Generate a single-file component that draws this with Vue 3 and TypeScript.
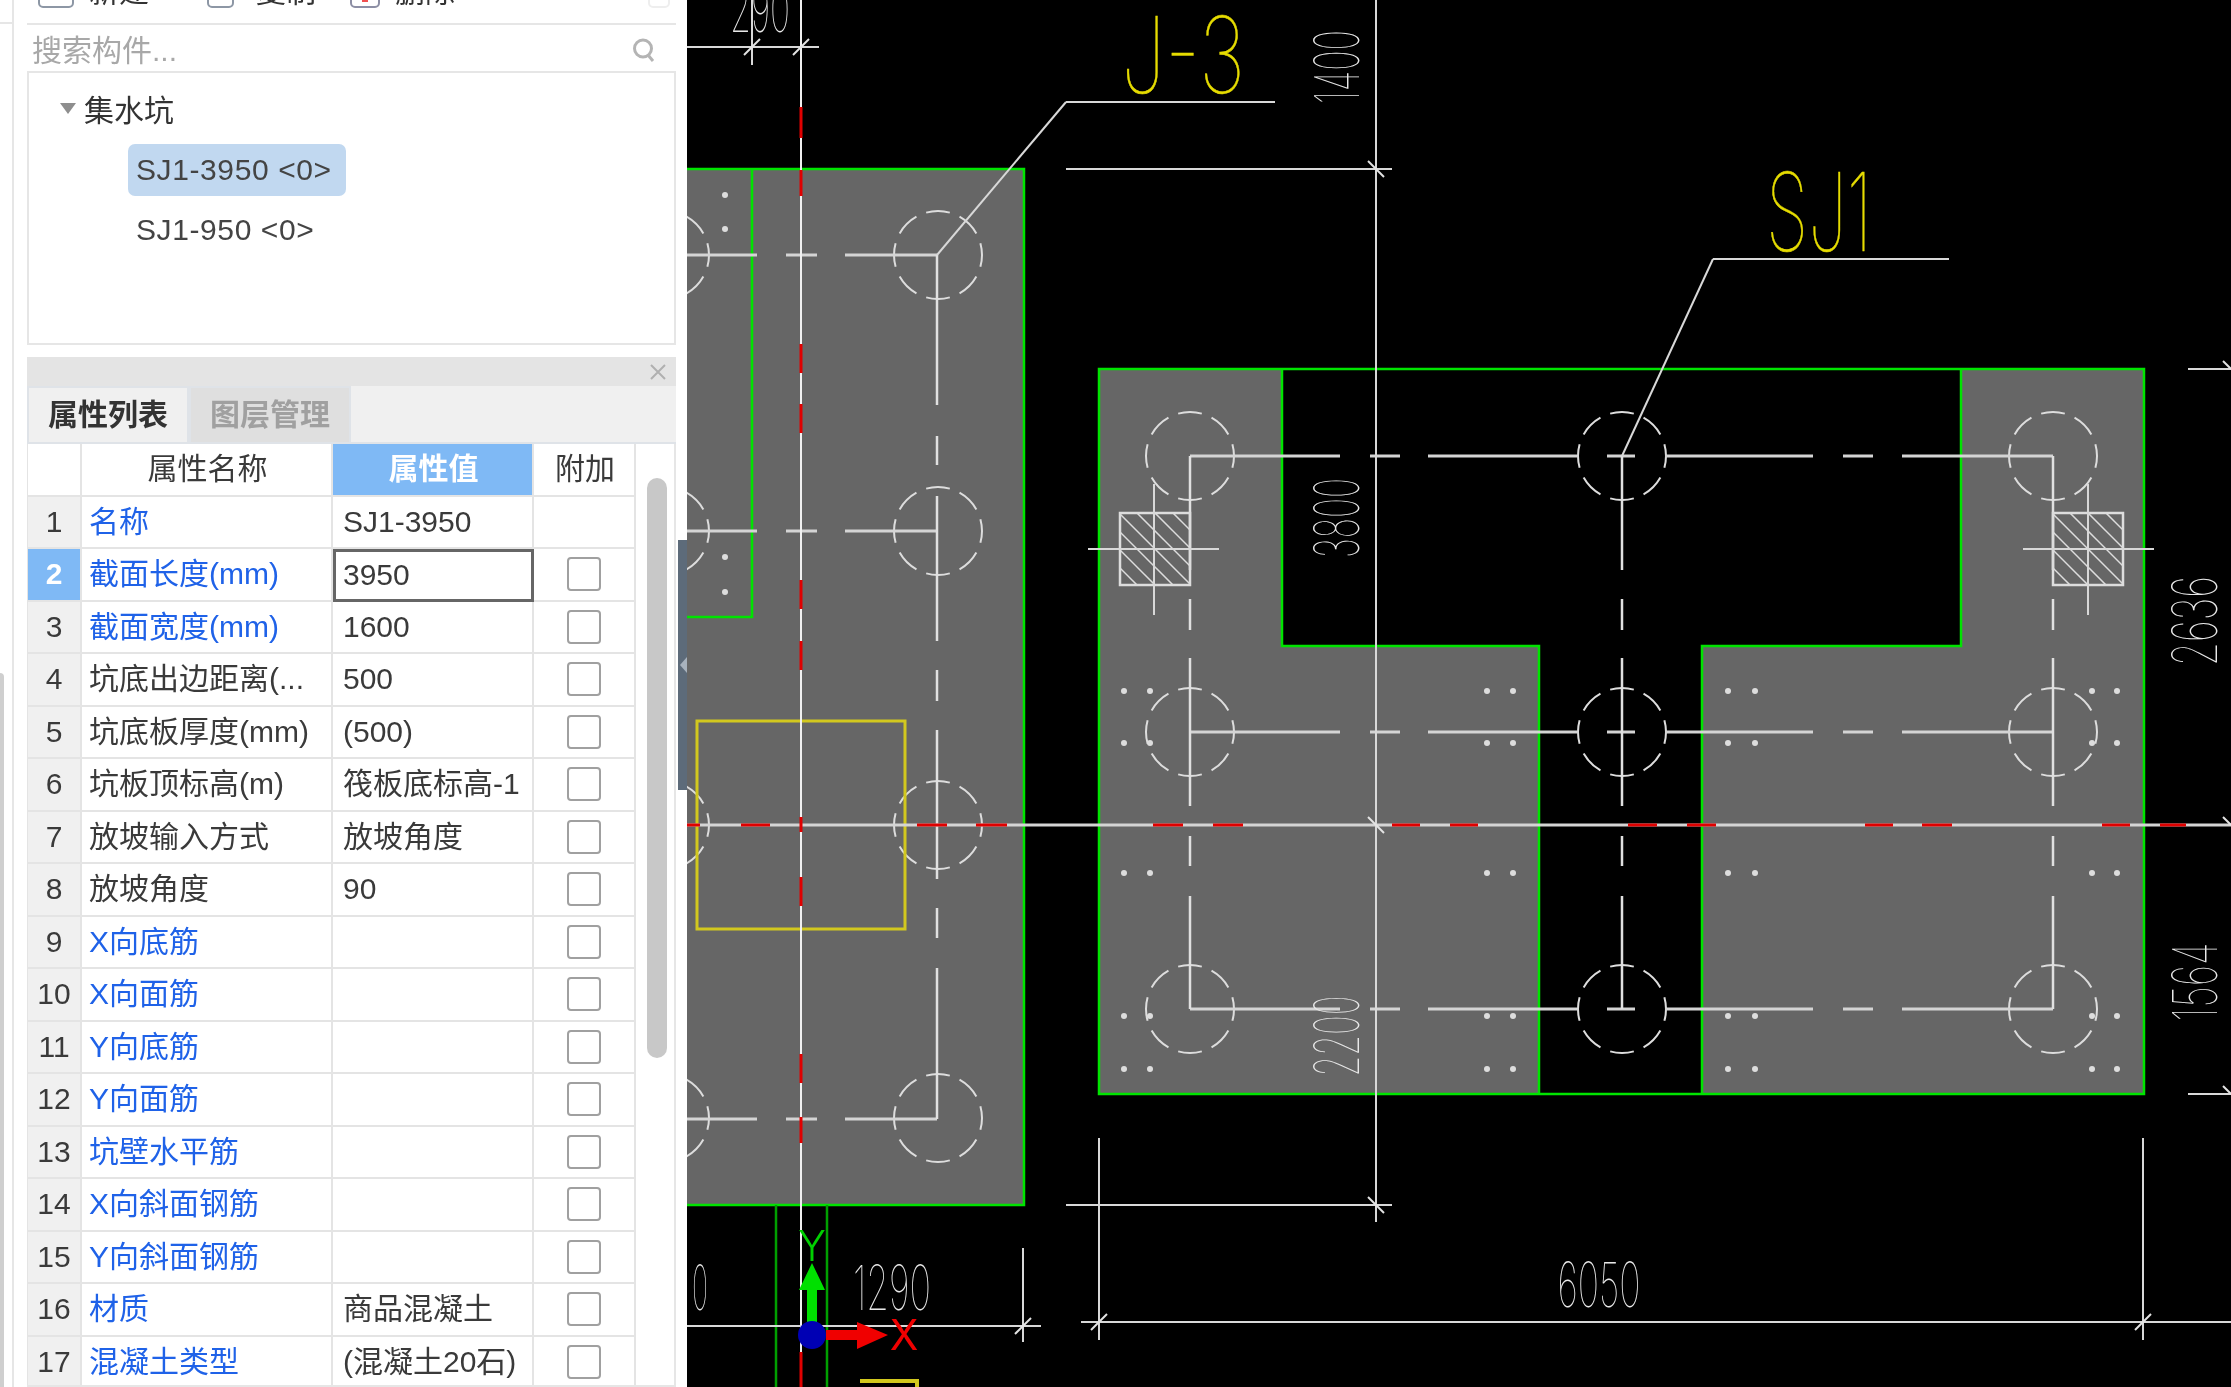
<script setup lang="ts">
type Seg = [number, number, number, number]

interface PropRow {
  name: string
  value: string
  link: boolean
}

interface CadLabel {
  text: string
  x: number
  y: number
  size: number
  len: number
  vertical?: boolean
}

const rows: PropRow[] = [
  { name: '名称', value: 'SJ1-3950', link: true },
  { name: '截面长度(mm)', value: '3950', link: true },
  { name: '截面宽度(mm)', value: '1600', link: true },
  { name: '坑底出边距离(...', value: '500', link: false },
  { name: '坑底板厚度(mm)', value: '(500)', link: false },
  { name: '坑板顶标高(m)', value: '筏板底标高-1', link: false },
  { name: '放坡输入方式', value: '放坡角度', link: false },
  { name: '放坡角度', value: '90', link: false },
  { name: 'X向底筋', value: '', link: true },
  { name: 'X向面筋', value: '', link: true },
  { name: 'Y向底筋', value: '', link: true },
  { name: 'Y向面筋', value: '', link: true },
  { name: '坑壁水平筋', value: '', link: true },
  { name: 'X向斜面钢筋', value: '', link: true },
  { name: 'Y向斜面钢筋', value: '', link: true },
  { name: '材质', value: '商品混凝土', link: true },
  { name: '混凝土类型', value: '(混凝土20石)', link: true },
]

// drawing coordinates are page pixels, the svg viewBox starts at x=687
const hAxis: Seg[] = []
const vAxis: Seg[] = []
for (const y of [255, 531, 1119]) {
  for (const [a, b] of [[687, 757], [786, 817], [845, 937]]) hAxis.push([a, y, b, y])
}
for (const y of [456, 732, 1009]) {
  for (const [a, b] of [[1190, 1340], [1370, 1400], [1428, 1577], [1607, 1635], [1665, 1813], [1843, 1873], [1902, 2053]]) {
    hAxis.push([a, y, b, y])
  }
}
for (const [a, b] of [[255, 405], [436, 465], [496, 641], [670, 701], [730, 879], [908, 938], [968, 1119]]) {
  vAxis.push([937, a, 937, b])
}
for (const x of [1190, 1622, 2053]) {
  for (const [a, b] of [[456, 570], [599, 630], [658, 806], [836, 866], [896, 1009]]) {
    vAxis.push([x, a, x, b])
  }
}

const circles: [number, number][] = []
for (const y of [255, 531, 825, 1118]) circles.push([665, y], [938, y])
for (const y of [456, 732, 1009]) circles.push([1190, y], [1622, y], [2053, y])

const dots: [number, number][] = []
for (const y of [195, 229, 557, 592]) dots.push([725, y])
for (const x of [1124, 1150, 1487, 1513, 1728, 1755, 2092, 2117]) {
  for (const y of [691, 743, 873, 1016, 1069]) dots.push([x, y])
}

const redV: [number, number][] = [
  [107, 138], [170, 196], [344, 373], [404, 433], [580, 609], [641, 670],
  [817, 832], [877, 906], [1054, 1083], [1117, 1143], [1352, 1387],
]
const redH: [number, number][] = [
  [687, 700], [741, 770], [917, 947], [976, 1007], [1153, 1183], [1213, 1243], [1392, 1420], [1450, 1478],
  [1628, 1657], [1687, 1716], [1865, 1893], [1922, 1952], [2102, 2130], [2160, 2186],
]

const dimLines: Seg[] = [
  [687, 47, 819, 47], [752, 0, 752, 65],
  [1066, 169, 1392, 169], [1376, 0, 1376, 1222], [1066, 1205, 1392, 1205],
  [2188, 369, 2231, 369], [2188, 1094, 2231, 1094],
  [1081, 1322, 2231, 1322], [1099, 1138, 1099, 1340], [2143, 1138, 2143, 1340],
  [687, 1326, 1041, 1326], [1023, 1248, 1023, 1342],
  [937, 255, 1066, 102], [1066, 102, 1275, 102],
  [1622, 456, 1713, 259], [1713, 259, 1949, 259],
  [1088, 549, 1219, 549], [1154, 484, 1154, 615],
  [2023, 549, 2154, 549], [2088, 484, 2088, 615],
]
const ticks: Seg[] = [
  [744, 55, 760, 39], [793, 55, 809, 39],
  [1368, 161, 1384, 177], [1368, 817, 1384, 833], [1368, 1197, 1384, 1213],
  [1091, 1330, 1107, 1314], [2135, 1330, 2151, 1314], [1015, 1334, 1031, 1318],
  [2223, 361, 2231, 369], [2223, 817, 2231, 825], [2223, 1086, 2231, 1094],
]

const hatchOffsets = [-72, -54, -36, -18, 0, 18, 36, 54, 72]

const labels: CadLabel[] = [
  { text: '290', x: 760, y: 10, size: 62, len: 60 },
  { text: '1400', x: 1337, y: 67, size: 62, len: 74, vertical: true },
  { text: '3800', x: 1337, y: 518, size: 62, len: 80, vertical: true },
  { text: '2200', x: 1337, y: 1036, size: 62, len: 81, vertical: true },
  { text: '2636', x: 2195, y: 621, size: 62, len: 90, vertical: true },
  { text: '1564', x: 2195, y: 982, size: 62, len: 79, vertical: true },
  { text: '6050', x: 1599, y: 1285, size: 62, len: 83 },
  { text: '1290', x: 892, y: 1288, size: 62, len: 78 },
  { text: '0', x: 700, y: 1288, size: 62, len: 16 },
]
</script>

<template>
  <div class="screen">
    <aside class="sidebar">
      <div class="rail">
        <div class="rail-top"></div>
        <div class="rail-gap"></div>
        <div class="rail-thumb"></div>
      </div>

      <div class="panels">
        <div class="toolbar">
          <div class="toolbar-inner">
            <span class="tool-icon"></span><span class="tool-label">新建</span>
            <span class="tool-icon small"></span><span class="tool-label">复制</span>
            <span class="tool-icon small del"><i class="del-mark"></i></span><span class="tool-label">删除</span>
            <span class="tool-spacer"></span>
            <span class="tool-more"></span>
          </div>
        </div>

        <div class="search">
          <span class="search-hint">搜索构件...</span>
          <svg class="search-icon" viewBox="0 0 24 24" width="24" height="24">
            <circle cx="11" cy="10.5" r="8.5" fill="none" stroke="#b4b4b4" stroke-width="3" />
            <path d="M16 17 L21 23" stroke="#b4b4b4" stroke-width="3" />
          </svg>
        </div>

        <div class="tree">
          <div class="tree-root">
            <span class="caret"></span>
            <span>集水坑</span>
          </div>
          <div class="tree-item selected">SJ1-3950 &lt;0&gt;</div>
          <div class="tree-item">SJ1-950 &lt;0&gt;</div>
        </div>

        <section class="props">
          <div class="props-bar">
            <svg viewBox="0 0 16 16" width="16" height="16">
              <path d="M1 1 L15 15 M15 1 L1 15" stroke="#b0b0b0" stroke-width="2" />
            </svg>
          </div>
          <div class="tabs">
            <div class="tab active">属性列表</div>
            <div class="tab">图层管理</div>
          </div>
          <div class="table-wrap">
            <div class="table">
              <div class="cell num"></div>
              <div class="cell head">属性名称</div>
              <div class="cell head current">属性值</div>
              <div class="cell head">附加</div>
              <template v-for="(row, i) in rows" :key="i">
                <div class="cell num" :class="{ on: i === 1 }">{{ i + 1 }}</div>
                <div class="cell name" :class="{ link: row.link }">{{ row.name }}</div>
                <div class="cell value" :class="{ editing: i === 1 }">{{ row.value }}</div>
                <div class="cell check"><span v-if="i > 0" class="box"></span></div>
              </template>
            </div>
            <div class="scroll"><div class="scroll-thumb"></div></div>
          </div>
        </section>
      </div>

      <div class="collapse"><span class="collapse-arrow"></span></div>
    </aside>

    <svg class="canvas" viewBox="687 0 1544 1387" width="1544" height="1387">
      <defs>
        <clipPath id="hatch-l"><rect x="1120" y="513" width="70" height="72" /></clipPath>
        <clipPath id="hatch-r"><rect x="2053" y="513" width="70" height="72" /></clipPath>
      </defs>

      <!-- slabs -->
      <path class="slab" d="M687 169 H1024 V1205 H687 Z" />
      <path class="slab" d="M1099 369 H1282 V646 H1539 V1094 H1099 Z" />
      <path class="slab" d="M2144 369 H1961 V646 H1702 V1094 H2144 Z" />
      <path class="edge" d="M687 169 H1024 V1205 H687 M752 169 V617 H687" />
      <path class="edge" d="M1099 369 H2144 V1094 H1099 Z M1282 369 V646 H1539 V1094 M1961 369 V646 H1702 V1094" />
      <path class="edge dark" d="M776 1205 V1387 M827 1205 V1387" />

      <!-- pile caps and axes -->
      <circle v-for="(c, i) in circles" :key="'c' + i" class="pile" :cx="c[0]" :cy="c[1]" r="44" />
      <line v-for="(s, i) in hAxis" :key="'h' + i" class="axis-h" :x1="s[0]" :y1="s[1]" :x2="s[2]" :y2="s[3]" />
      <line v-for="(s, i) in vAxis" :key="'v' + i" class="axis-v" :x1="s[0]" :y1="s[1]" :x2="s[2]" :y2="s[3]" />
      <circle v-for="(d, i) in dots" :key="'d' + i" class="dot" :cx="d[0]" :cy="d[1]" r="3" />

      <!-- columns -->
      <rect class="col" x="1120" y="513" width="70" height="72" />
      <rect class="col" x="2053" y="513" width="70" height="72" />
      <g clip-path="url(#hatch-l)">
        <line v-for="o in hatchOffsets" :key="'l' + o" class="hatch" :x1="1155 + o - 50" :y1="499" :x2="1155 + o + 50" :y2="599" />
      </g>
      <g clip-path="url(#hatch-r)">
        <line v-for="o in hatchOffsets" :key="'r' + o" class="hatch" :x1="2088 + o - 50" :y1="499" :x2="2088 + o + 50" :y2="599" />
      </g>

      <rect class="pit" x="697" y="721" width="208" height="208" />

      <!-- gridlines -->
      <line class="grid-v" x1="801" y1="0" x2="801" y2="1387" />
      <line class="grid-h" x1="687" y1="825" x2="2231" y2="825" />
      <line v-for="(r, i) in redV" :key="'rv' + i" class="red" x1="801" :y1="r[0]" x2="801" :y2="r[1]" />
      <line v-for="(r, i) in redH" :key="'rh' + i" class="red" :x1="r[0]" y1="825" :x2="r[1]" y2="825" />

      <!-- dimensions -->
      <line v-for="(s, i) in dimLines" :key="'dl' + i" class="dim" :x1="s[0]" :y1="s[1]" :x2="s[2]" :y2="s[3]" />
      <line v-for="(s, i) in ticks" :key="'t' + i" class="tick" :x1="s[0]" :y1="s[1]" :x2="s[2]" :y2="s[3]" />
      <text
        v-for="l in labels"
        :key="l.text + l.x"
        class="cad"
        text-anchor="middle"
        lengthAdjust="spacingAndGlyphs"
        :x="l.x"
        :y="l.y + l.size * 0.35"
        :font-size="l.size"
        :textLength="l.len"
        :transform="l.vertical ? `rotate(-90 ${l.x} ${l.y})` : undefined"
      >{{ l.text }}</text>

      <text class="mark" x="1183" y="93" font-size="106" text-anchor="middle" textLength="124" lengthAdjust="spacingAndGlyphs">J-3</text>
      <text class="mark" x="1819" y="251" font-size="108" text-anchor="middle" textLength="106" lengthAdjust="spacingAndGlyphs">SJ1</text>
      <path class="stub" d="M860 1381 H917 V1387" />

      <!-- ucs icon -->
      <text class="ucs-y" x="812" y="1261" font-size="42" text-anchor="middle">Y</text>
      <path class="ucs-green" d="M812 1263 L825 1290 H817 V1335 H807 V1290 H799 Z" />
      <path class="ucs-red" d="M826 1330 H857 V1322 L888 1335 L857 1349 V1340 H826 Z" />
      <circle cx="812" cy="1335" r="14" fill="#0000b4" />
      <text class="ucs-x" x="904" y="1350" font-size="42" text-anchor="middle">X</text>
    </svg>
  </div>
</template>

<style>
html,
body {
  margin: 0;
  background: #fff;
}
</style>

<style scoped>
.screen {
  width: 2231px;
  height: 1387px;
  display: flex;
  overflow: hidden;
  background: #000;
  font-family: "Liberation Sans", "Noto Sans CJK SC", sans-serif;
  font-size: 30px;
  color: #333;
  filter: blur(0.5px);
}

.sidebar {
  position: relative;
  flex: 0 0 687px;
  display: flex;
  background: #fff;
}

.rail {
  flex: 0 0 14px;
  display: flex;
  flex-direction: column;
  box-sizing: border-box;
  border-right: 2px solid #e6e6e6;
}

.rail-top {
  height: 22px;
  border-bottom: 2px solid #e6e6e6;
}

.rail-gap {
  height: 649px;
}

.rail-thumb {
  flex: 1;
  width: 4px;
  background: #cfcfcf;
  border-radius: 0 4px 0 0;
}

.panels {
  margin-left: 13px;
  width: 649px;
  display: flex;
  flex-direction: column;
}

.toolbar {
  height: 23px;
  overflow: hidden;
  border-bottom: 2px solid #e6e6e6;
  box-sizing: content-box;
}

.toolbar-inner {
  margin-top: -25px;
  height: 33px;
  display: flex;
  align-items: flex-end;
  padding-left: 11px;
  line-height: 33px;
}

.tool-icon {
  width: 36px;
  height: 30px;
  box-sizing: border-box;
  border: 2px solid #8d97a5;
  border-radius: 5px;
  margin-right: 15px;
}

.tool-icon.small {
  width: 27px;
  margin-right: 22px;
}

.tool-icon.del {
  position: relative;
  width: 30px;
  border-color: #8d8fa5;
  margin-right: 15px;
}

.del-mark {
  position: absolute;
  left: 10px;
  bottom: 4px;
  width: 6px;
  height: 3px;
  background: #f05050;
}

.tool-label {
  width: 60px;
  margin-right: 58px;
}

.tool-label:nth-of-type(4) {
  margin-right: 34px;
}

.tool-spacer {
  flex: 1;
}

.tool-more {
  width: 22px;
  height: 30px;
  margin-right: 6px;
  box-sizing: border-box;
  border: 2px solid #eee;
  border-radius: 5px;
}

.search {
  height: 46px;
  display: flex;
  align-items: center;
  justify-content: space-between;
  padding: 0 20px 0 5px;
  border-bottom: 2px solid #e6e6e6;
}

.search-hint {
  color: #a8a8a8;
}

.search-icon {
  margin-top: 4px;
}

.tree {
  height: 272px;
  box-sizing: border-box;
  border: 2px solid #e6e6e6;
  border-top: 0;
  padding-top: 19px;
}

.tree-root {
  display: flex;
  align-items: center;
  gap: 8px;
  height: 32px;
  padding-left: 31px;
  margin-bottom: 20px;
}

.caret {
  width: 0;
  height: 0;
  border: 8px solid transparent;
  border-top: 11px solid #8e8e8e;
  border-bottom: 0;
}

.tree-item {
  width: fit-content;
  height: 52px;
  line-height: 52px;
  margin-left: 99px;
  margin-bottom: 8px;
  padding: 0 14px 0 8px;
  border-radius: 7px;
  color: #444;
  letter-spacing: 0.6px;
}

.tree-item.selected {
  background: #c1d8f0;
}

.props {
  margin-top: 12px;
  display: flex;
  flex-direction: column;
}

.props-bar {
  height: 29px;
  display: flex;
  align-items: center;
  justify-content: flex-end;
  padding-right: 10px;
  background: #e4e4e4;
}

.tabs {
  height: 58px;
  box-sizing: border-box;
  display: flex;
  background: #f0f0f0;
  border-bottom: 2px solid #dfe3e8;
}

.tab {
  width: 162px;
  box-sizing: border-box;
  text-align: center;
  line-height: 54px;
  border: 2px solid #dfe3e8;
  border-bottom: 0;
  background: #dfdfdf;
  color: #a0a0a0;
  font-weight: 700;
}

.tab.active {
  background: #f0f0f0;
  color: #333;
}

.table-wrap {
  display: flex;
  height: 941px;
  overflow: hidden;
  border-right: 2px solid #e6e6e6;
  border-bottom: 2px solid #e6e6e6;
  box-sizing: content-box;
}

.table {
  flex: 0 0 609px;
  display: grid;
  grid-template-columns: 55px 251px 201px 102px;
  grid-auto-rows: 52.5px;
  align-content: start;
}

.cell {
  box-sizing: border-box;
  border-right: 2px solid #e4e4e4;
  border-bottom: 2px solid #e4e4e4;
  line-height: 50px;
  white-space: nowrap;
  overflow: hidden;
  color: #3a3a3a;
}

.num {
  background: #f0f0f0;
  border-left: 1px solid #e4e4e4;
  text-align: center;
}

.table > .num:first-child {
  background: #fff;
}

.num.on {
  background: #7fb9f5;
  color: #fff;
  font-weight: 700;
}

.head {
  background: #fff;
  text-align: center;
  padding-left: 2px;
}

.head.current {
  background: #7fb9f5;
  color: #fff;
  font-weight: 700;
}

.name {
  padding-left: 7px;
}

.name.link {
  color: #1f62e8;
}

.value {
  padding-left: 10px;
}

.value.editing {
  border: 3px solid #666;
  line-height: 46px;
  padding-left: 7px;
}

.check {
  display: flex;
  align-items: center;
  justify-content: center;
}

.box {
  width: 34px;
  height: 34px;
  box-sizing: border-box;
  border: 2px solid #a0a0a0;
  border-radius: 4px;
  background: #fff;
}

.scroll {
  flex: 1;
  padding: 34px 0 0 11px;
  background: #fff;
}

.scroll-thumb {
  width: 20px;
  height: 580px;
  border-radius: 10px;
  background: #c8c8c8;
}

.collapse {
  position: absolute;
  right: 0;
  top: 540px;
  width: 9px;
  height: 250px;
  background: #5d6b7a;
  display: flex;
  align-items: center;
  justify-content: flex-end;
}

.collapse-arrow {
  width: 0;
  height: 0;
  border: 8px solid transparent;
  border-right: 7px solid #a8b2bd;
  border-left: 0;
}

.canvas {
  flex: 0 0 1544px;
  display: block;
  background: #000;
}

.slab {
  fill: #666;
}

.edge {
  fill: none;
  stroke: #00e400;
  stroke-width: 2.5;
}

.edge.dark {
  stroke: #00a000;
}

.pile {
  fill: none;
  stroke: #ddd;
  stroke-width: 2;
  stroke-dasharray: 24 10.5;
  stroke-dashoffset: 12;
}

.axis-h {
  stroke: #d4d4d4;
  stroke-width: 3;
}

.axis-v {
  stroke: #e0e0e0;
  stroke-width: 2.5;
}

.dot {
  fill: #ddd;
}

.col {
  fill: none;
  stroke: #ddd;
  stroke-width: 2.5;
}

.hatch {
  stroke: #ddd;
  stroke-width: 1.5;
}

.pit {
  fill: none;
  stroke: #d2c81e;
  stroke-width: 3;
}

.grid-v {
  stroke: #f0f0f0;
  stroke-width: 2;
}

.grid-h {
  stroke: #d4d4d4;
  stroke-width: 3;
}

.red {
  stroke: #e00000;
  stroke-width: 3;
}

.dim {
  stroke: #d8d8d8;
  stroke-width: 2;
}

.tick {
  stroke: #e4e4e4;
  stroke-width: 2;
}

.cad {
  fill: #e8e8e8;
  font-family: Inter, Roboto, sans-serif;
  font-weight: 100;
}

.mark {
  fill: #e6dc00;
  stroke: #e6dc00;
  stroke-width: 0.5;
  font-family: Inter, Roboto, sans-serif;
  font-weight: 100;
}

.stub {
  fill: none;
  stroke: #d2c81e;
  stroke-width: 4;
}

.ucs-green {
  fill: #00e000;
}

.ucs-red {
  fill: #f00000;
}

.ucs-y {
  fill: #00d000;
  font-family: Inter, Roboto, sans-serif;
  font-weight: 300;
}

.ucs-x {
  fill: #f00000;
  font-family: Inter, Roboto, sans-serif;
  font-weight: 400;
}
</style>
